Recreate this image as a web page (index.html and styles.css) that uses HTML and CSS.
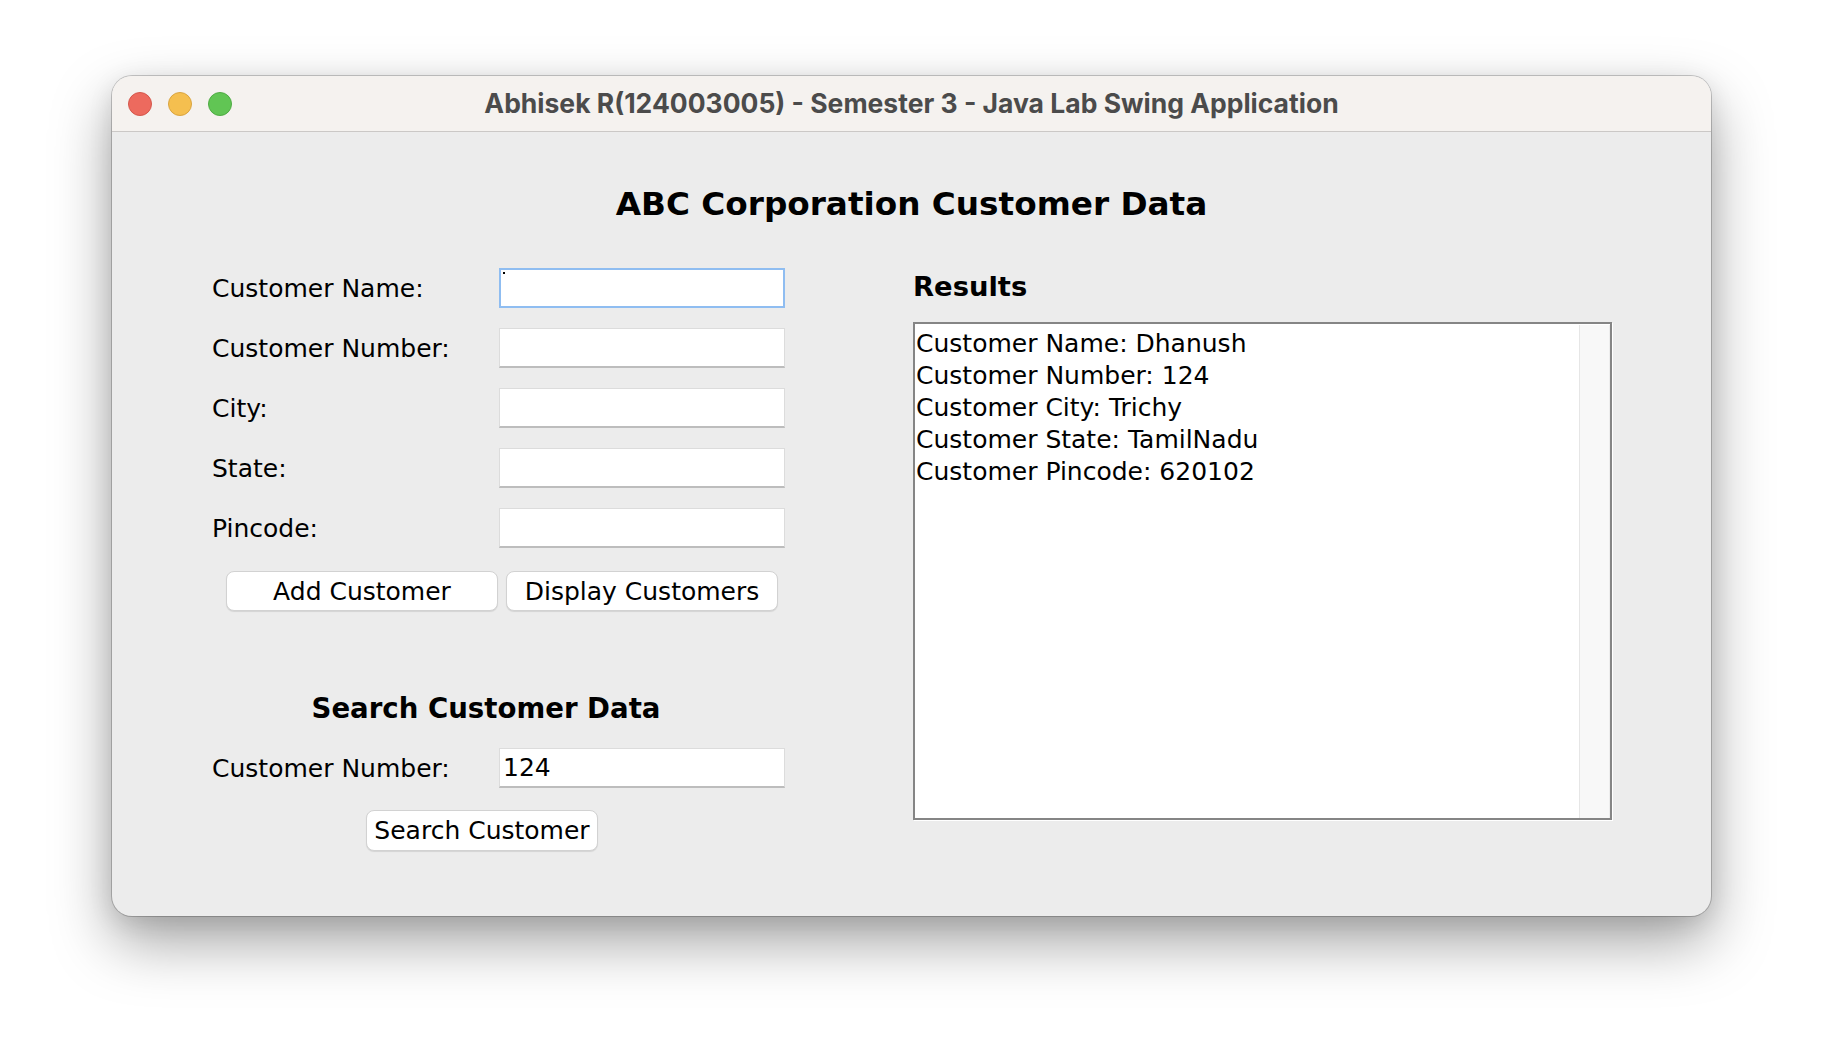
FILE: index.html
```html
<!DOCTYPE html>
<html>
<head>
<meta charset="utf-8">
<title>Java Lab Swing Application</title>
<link rel="stylesheet" href="styles.css">
</head>
<body>
<div class="window">
  <div class="titlebar">
    <div class="lights">
      <span class="light red"></span>
      <span class="light yellow"></span>
      <span class="light green"></span>
    </div>
    <div class="title">Abhisek R(124003005) - Semester 3 - Java Lab Swing Application</div>
    <div class="spacer"></div>
  </div>
  <div class="content">
    <h1 class="main-title">ABC Corporation Customer Data</h1>
    <div class="columns">
      <div class="form-col">
        <div class="row"><span class="label">Customer Name:</span><div class="field focused"><span class="caret"></span></div></div>
        <div class="row"><span class="label">Customer Number:</span><div class="field"></div></div>
        <div class="row"><span class="label">City:</span><div class="field"></div></div>
        <div class="row"><span class="label">State:</span><div class="field"></div></div>
        <div class="row"><span class="label">Pincode:</span><div class="field"></div></div>
        <div class="btn-row">
          <button class="btn wide">Add Customer</button>
          <button class="btn wide">Display Customers</button>
        </div>
        <div class="search">
          <h2 class="search-title">Search Customer Data</h2>
          <div class="row search-row"><span class="label">Customer Number:</span><div class="field">124</div></div>
          <div class="search-btn-row"><button class="btn search-btn">Search Customer</button></div>
        </div>
      </div>
      <div class="results-col">
        <h2 class="results-title">Results</h2>
        <div class="results-box">
          <div class="results-text">Customer Name: Dhanush<br>Customer Number: 124<br>Customer City: Trichy<br>Customer State: TamilNadu<br>Customer Pincode: 620102</div>
          <div class="scroll-track"></div>
        </div>
      </div>
    </div>
  </div>
</div>
</body>
</html>
```
FILE: styles.css
```css
html, body {
  margin: 0;
}
body {
  width: 1824px;
  height: 1064px;
  box-sizing: border-box;
  padding: 76px 0 0 112px;
  background: #ffffff;
  font-family: "DejaVu Sans", sans-serif;
  overflow: hidden;
}
.window {
  width: 1599px;
  height: 840px;
  border-radius: 20px;
  background: #ececec;
  overflow: hidden;
  display: flex;
  flex-direction: column;
  box-shadow: 0 0 0 1px rgba(0,0,0,0.2), 0 26px 60px rgba(0,0,0,0.36), 0 6px 24px rgba(0,0,0,0.10);
}
.titlebar {
  height: 55px;
  flex: none;
  background: #f5f2ef;
  border-bottom: 1px solid #cbc8c6;
  display: grid;
  grid-template-columns: 1fr auto 1fr;
  align-items: center;
}
.lights {
  display: flex;
  gap: 16px;
  padding-left: 16px;
}
.light {
  width: 22px;
  height: 22px;
  border-radius: 50%;
  border: 1px solid;
}
.red { background: #ed6a5e; border-color: #d4574c; }
.yellow { background: #f5bf4f; border-color: #d9a440; }
.green { background: #61c554; border-color: #4fab44; }
.title {
  font-family: "Inter", "Roboto", sans-serif;
  font-weight: 700;
  font-size: 26.5px;
  color: #4b4b4b;
  white-space: nowrap;
  padding-bottom: 2px;
}
.content {
  flex: 1;
  padding-top: 52px;
}
.main-title {
  margin: 0;
  text-align: center;
  font-size: 32.7px;
  line-height: 40px;
  font-weight: bold;
  color: #000;
}
.columns {
  display: flex;
  margin-top: 44px;
  padding-left: 100px;
}
.form-col {
  width: 573px;
}
.row {
  height: 40px;
  display: flex;
  align-items: center;
  justify-content: space-between;
  margin-bottom: 20px;
}
.label {
  font-size: 25px;
  color: #000;
}
.field {
  width: 286px;
  height: 40px;
  box-sizing: border-box;
  background: #fff;
  border: 1px solid #dcdcdc;
  border-bottom: 2px solid #bdbdbd;
  font-size: 25px;
  line-height: 37px;
  padding-left: 3px;
  color: #000;
  position: relative;
}
.field.focused {
  border: 2px solid #8fbdf1;
}
.caret {
  position: absolute;
  left: 2px;
  top: 2px;
  width: 2px;
  height: 2px;
  background: #000;
}
.btn-row {
  display: flex;
  gap: 8px;
  padding-left: 14px;
  margin-top: 23px;
}
.btn {
  height: 40px;
  background: #fff;
  border: 1px solid #d2d2d2;
  border-radius: 8px;
  box-shadow: 0 1px 1px rgba(0,0,0,0.10);
  font-family: "DejaVu Sans", sans-serif;
  font-size: 25px;
  color: #000;
  padding: 0;
}
.btn.wide {
  width: 272px;
}
.search {
  width: 548px;
}
.search-title {
  margin: 78px 0 0 0;
  text-align: center;
  font-size: 27.6px;
  line-height: 40px;
  font-weight: bold;
  color: #000;
}
.search-row {
  width: 573px;
  margin: 19px 0 0 0;
}
.search-btn-row {
  margin-top: 22px;
  padding-left: 154px;
}
.search-btn {
  width: 232px;
  height: 41px;
}
.results-col {
  margin-left: 128px;
}
.results-title {
  margin: -1px 0 0 0;
  font-size: 27.4px;
  line-height: 40px;
  font-weight: bold;
  color: #000;
}
.results-box {
  margin-top: 15px;
  width: 699px;
  height: 498px;
  box-sizing: border-box;
  border: 2px solid #858585;
  background: #fff;
  box-shadow: 1px 1px 0 #ffffff;
  display: flex;
}
.results-text {
  flex: 1;
  padding: 4px 0 0 1px;
  font-size: 25px;
  line-height: 32px;
  color: #000;
}
.scroll-track {
  width: 29px;
  margin-top: 1px;
  background: #f8f8f8;
  border-left: 1px solid #e6e6e6;
  border-right: 1px solid #ededed;
}
```
